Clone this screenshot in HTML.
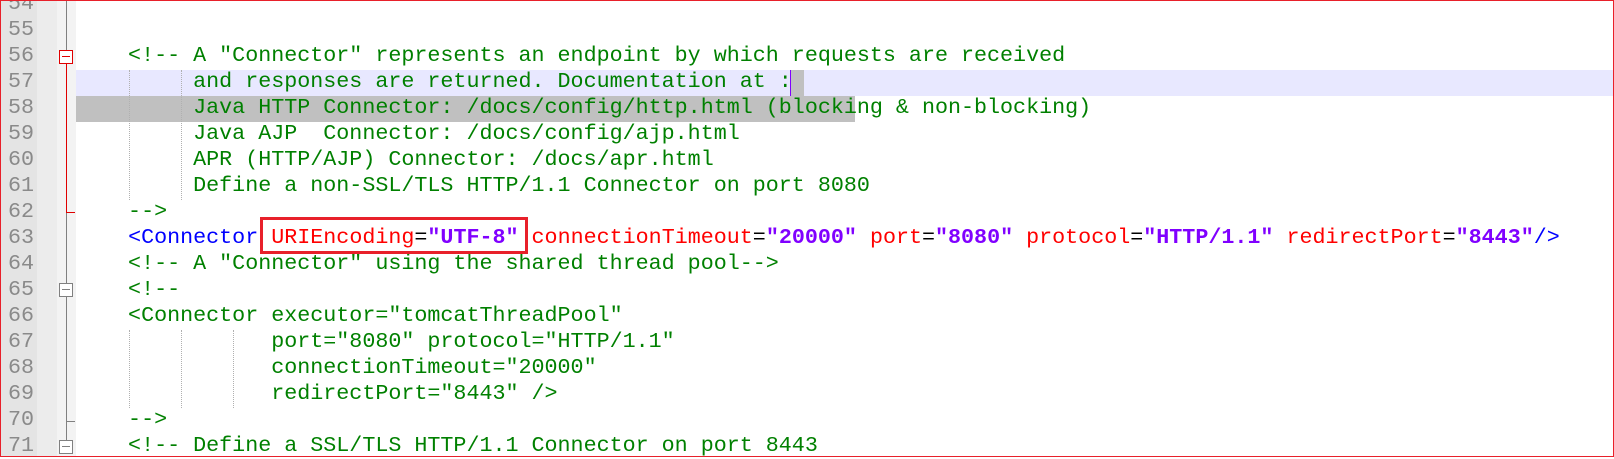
<!DOCTYPE html>
<html><head><meta charset="utf-8"><style>
html,body{margin:0;padding:0;}
body{width:1614px;height:457px;position:relative;overflow:hidden;background:#fff;font-family:"Liberation Mono","Courier New",monospace;}
.g1{position:absolute;left:0;top:0;width:37px;height:457px;background:#e4e4e4;}
.g2{position:absolute;left:37px;top:0;width:20px;height:457px;background:#ececec;}
.fm{position:absolute;left:57px;top:0;width:19px;height:457px;background:#f3f3f3;}
.num{position:absolute;left:0;width:34px;text-align:right;color:#8a8a8a;font-size:21.7px;line-height:26px;}
pre{margin:0;position:absolute;left:76px;top:-9px;font-family:inherit;font-size:21.7px;line-height:26px;color:#008000;white-space:pre;}
.b{color:#0000ff}.r{color:#ff0000}.k{color:#000}.v{color:#8000ff;font-weight:bold}
.hl{position:absolute;left:76px;top:70px;width:1538px;height:26px;background:#e8e8ff;}
.sel{position:absolute;left:76px;top:96px;width:779px;height:26px;background:#c0c0c0;}
.sel2{position:absolute;left:790px;top:70px;width:14px;height:26px;background:#c0c0c0;}
.caret{position:absolute;left:790px;top:70px;width:1px;height:26px;background:#8000ff;}
.guide{position:absolute;width:0;border-left:1px dotted #b0b0b0;}
.box{position:absolute;left:260px;top:217px;width:262px;height:31px;border:3px solid #e8202a;}
.frame{position:absolute;left:0;top:0;width:1612px;height:455px;border:1px solid #e8202a;}
</style></head><body>
<div class="g1"></div><div class="g2"></div><div class="fm"></div>
<div class="num" style="top:-9px">54</div>
<div class="num" style="top:17px">55</div>
<div class="num" style="top:43px">56</div>
<div class="num" style="top:69px">57</div>
<div class="num" style="top:95px">58</div>
<div class="num" style="top:121px">59</div>
<div class="num" style="top:147px">60</div>
<div class="num" style="top:173px">61</div>
<div class="num" style="top:199px">62</div>
<div class="num" style="top:225px">63</div>
<div class="num" style="top:251px">64</div>
<div class="num" style="top:277px">65</div>
<div class="num" style="top:303px">66</div>
<div class="num" style="top:329px">67</div>
<div class="num" style="top:355px">68</div>
<div class="num" style="top:381px">69</div>
<div class="num" style="top:407px">70</div>
<div class="num" style="top:433px">71</div>
<!-- fold markers -->
<div style="position:absolute;left:66px;top:0;width:1px;height:50px;background:#808080"></div>
<div style="position:absolute;left:59px;top:50px;width:12px;height:12px;border:1px solid #e00000;background:#fff"></div>
<div style="position:absolute;left:62px;top:56px;width:8px;height:1px;background:#e00000"></div>
<div style="position:absolute;left:66px;top:64px;width:1px;height:149px;background:#e00000"></div>
<div style="position:absolute;left:66px;top:212px;width:9px;height:1px;background:#e00000"></div>
<div style="position:absolute;left:66px;top:213px;width:1px;height:70px;background:#808080"></div>
<div style="position:absolute;left:59px;top:283px;width:12px;height:12px;border:1px solid #808080;background:#fff"></div>
<div style="position:absolute;left:62px;top:289px;width:8px;height:1px;background:#808080"></div>
<div style="position:absolute;left:66px;top:297px;width:1px;height:143px;background:#808080"></div>
<div style="position:absolute;left:66px;top:421px;width:9px;height:1px;background:#808080"></div>
<div style="position:absolute;left:59px;top:440px;width:12px;height:12px;border:1px solid #808080;background:#fff"></div>
<div style="position:absolute;left:62px;top:446px;width:8px;height:1px;background:#808080"></div>
<div class="hl"></div><div class="sel"></div><div class="sel2"></div>
<div class="guide" style="left:129px;top:70px;height:130px"></div>
<div class="guide" style="left:181px;top:70px;height:130px"></div>
<div class="guide" style="left:129px;top:330px;height:78px"></div>
<div class="guide" style="left:181px;top:330px;height:78px"></div>
<div class="guide" style="left:233px;top:330px;height:78px"></div>
<pre>


    &lt;!-- A "Connector" represents an endpoint by which requests are received
         and responses are returned. Documentation at :
         Java HTTP Connector: /docs/config/http.html (blocking &amp; non-blocking)
         Java AJP  Connector: /docs/config/ajp.html
         APR (HTTP/AJP) Connector: /docs/apr.html
         Define a non-SSL/TLS HTTP/1.1 Connector on port 8080
    --&gt;
    <span class="b">&lt;Connector</span> <span class="r">URIEncoding</span><span class="k">=</span><span class="v">"UTF-8"</span> <span class="r">connectionTimeout</span><span class="k">=</span><span class="v">"20000"</span> <span class="r">port</span><span class="k">=</span><span class="v">"8080"</span> <span class="r">protocol</span><span class="k">=</span><span class="v">"HTTP/1.1"</span> <span class="r">redirectPort</span><span class="k">=</span><span class="v">"8443"</span><span class="b">/&gt;</span>
    &lt;!-- A "Connector" using the shared thread pool--&gt;
    &lt;!--
    &lt;Connector executor="tomcatThreadPool"
               port="8080" protocol="HTTP/1.1"
               connectionTimeout="20000"
               redirectPort="8443" /&gt;
    --&gt;
    &lt;!-- Define a SSL/TLS HTTP/1.1 Connector on port 8443
</pre>
<div class="caret"></div>
<div class="box"></div>
<div class="frame"></div>
</body></html>
